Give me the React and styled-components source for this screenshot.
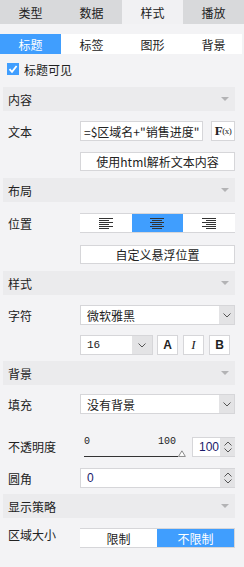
import React from "react";
import styled, { createGlobalStyle } from "styled-components";

const Global = createGlobalStyle`
  html, body {
    margin: 0;
    padding: 0;
    background: #f3f3f5;
  }
  body {
    font-family: "Noto Sans CJK SC", "Liberation Sans", sans-serif;
    font-size: 12px;
    color: #222;
  }
`;

const Page = styled.div`
  width: 244px;
  height: 567px;
  background: #f3f3f5;
  overflow: hidden;
`;

const TopTabs = styled.div`
  display: grid;
  grid-template-columns: repeat(4, 61px);
  height: 24px;
  background: #d8d9db;
`;

const TopTab = styled.div`
  display: flex;
  align-items: center;
  justify-content: center;
  font-size: 12px;
  background: ${p => (p.active ? "#f1f1f3" : "transparent")};
`;

const SubTabs = styled.div`
  display: grid;
  grid-template-columns: repeat(4, 61px);
  width: 242px;
  height: 20px;
  margin-top: 10px;
  background: #fff;
`;

const SubTab = styled.div`
  display: flex;
  align-items: center;
  justify-content: center;
  font-size: 12px;
  color: ${p => (p.active ? "#fff" : "#222")};
  background: ${p => (p.active ? "#409efe" : "transparent")};
`;

const CheckRow = styled.label`
  display: flex;
  align-items: center;
  gap: 5px;
  height: 22px;
  margin-top: 4px;
  padding-left: 7px;
`;

const CheckBox = styled.span`
  width: 12px;
  height: 12px;
  background: #409efe;
  display: flex;
  align-items: center;
  justify-content: center;
`;

const Header = styled.div`
  display: flex;
  align-items: center;
  justify-content: space-between;
  margin: ${p => p.top || 7}px 0 0 3px;
  width: 232px;
  height: 24px;
  padding: 0 5px;
  box-sizing: border-box;
  background: #ebebed;
`;

const Caret = styled.span`
  width: 0;
  height: 0;
  border-left: 4px solid transparent;
  border-right: 4px solid transparent;
  border-top: 4px solid #b3b3b5;
  margin-right: 1px;
`;

const Row = styled.div`
  display: flex;
  align-items: ${p => (p.alignTop ? "flex-start" : "center")};
  margin-top: ${p => p.top ?? 10}px;
  min-height: 20px;
`;

const Label = styled.div`
  width: 72px;
  padding-left: 8px;
  flex-shrink: 0;
  line-height: ${p => (p.alignTop ? "14px" : "normal")};
`;

const Control = styled.div`
  display: flex;
  align-items: center;
  width: 155px;
`;

const TextBox = styled.div`
  flex: 1;
  height: 20px;
  box-sizing: border-box;
  border: 1px solid #d6d6d9;
  background: #fff;
  display: flex;
  align-items: center;
  padding-left: ${p => p.pad ?? 4}px;
  font-size: 12px;
  white-space: nowrap;
  overflow: hidden;
`;

const Fx = styled.div`
  width: 24px;
  height: 20px;
  box-sizing: border-box;
  border: 1px solid #d6d6d9;
  background: #fff;
  margin-left: 8px;
  display: flex;
  align-items: center;
  justify-content: center;
  font-family: "Liberation Serif", serif;
  font-weight: bold;
  font-size: 13px;
  letter-spacing: -0.5px;
  & small {
    font-size: 9px;
    font-weight: normal;
  }
`;

const Button = styled.div`
  width: 155px;
  height: 19px;
  box-sizing: border-box;
  border: 1px solid #d6d6d9;
  background: #fff;
  display: flex;
  align-items: center;
  justify-content: center;
  font-size: 12px;
`;

const Segments = styled.div`
  display: grid;
  grid-template-columns: repeat(${p => p.count}, 1fr);
  width: 155px;
  height: 20px;
  box-sizing: border-box;
  border: 1px solid #d6d6d9;
  border-left: none;
  border-right: ${p => (p.closed ? "1px solid #d6d6d9" : "none")};
  background: #fff;
`;

const Segment = styled.div`
  display: flex;
  align-items: center;
  justify-content: center;
  background: ${p => (p.active ? "#409efe" : "transparent")};
  color: ${p => (p.active ? "#fff" : "#222")};
  font-size: 12px;
`;

const Select = styled.div`
  display: flex;
  width: ${p => p.w || 155}px;
  height: 20px;
  box-sizing: border-box;
  border: 1px solid #d6d6d9;
  background: #fff;
`;

const SelectText = styled.div`
  flex: 1;
  display: flex;
  align-items: center;
  padding-left: 6px;
  font-size: ${p => (p.num ? 11 : 12)}px;
  font-family: ${p =>
    p.num ? '"Liberation Mono", monospace' : "inherit"};
`;

const SelectArrow = styled.div`
  width: ${p => p.w || 15}px;
  background: #e3e3e5;
  display: flex;
  align-items: center;
  justify-content: center;
`;

const StyleBtn = styled.div`
  width: 21px;
  height: 20px;
  box-sizing: border-box;
  border: 1px solid #d6d6d9;
  background: #fff;
  display: flex;
  align-items: center;
  justify-content: center;
  font-family: ${p =>
    p.italic ? '"Liberation Serif", serif' : '"Liberation Sans", sans-serif'};
  font-style: ${p => (p.italic ? "italic" : "normal")};
  font-weight: ${p => (p.italic ? "normal" : "bold")};
  font-size: ${p => (p.italic ? 13 : 12)}px;
  color: #222;
  margin-left: ${p => p.ml || 0}px;
`;

const Slider = styled.div`
  width: 106px;
  display: flex;
  flex-direction: column;
  padding-left: 4px;
  padding-top: 1px;
  box-sizing: border-box;
`;

const SliderLabels = styled.div`
  display: flex;
  justify-content: space-between;
  width: 92px;
  font-family: "Liberation Mono", monospace;
  font-size: 10px;
  line-height: 10px;
`;

const SliderTrack = styled.div`
  display: flex;
  align-items: flex-end;
  margin-top: 3px;
  & span {
    width: 96px;
    height: 1px;
    background: #333;
  }
`;

const Spin = styled.div`
  display: flex;
  height: 20px;
  width: ${p => p.w}px;
  box-sizing: border-box;
  border: 1px solid #d6d6d9;
  border-right: none;
  background: #fff;
  margin-left: ${p => p.ml || 0}px;
`;

const SpinValue = styled.div`
  flex: 1;
  display: flex;
  align-items: center;
  padding-left: 6px;
  font-family: "Liberation Sans", sans-serif;
  font-size: 12px;
  color: #1a1a6a;
`;

const SpinArrows = styled.div`
  width: 15px;
  background: #e3e3e5;
  display: flex;
  flex-direction: column;
  align-items: center;
  justify-content: center;
  gap: 2px;
`;

const Chevron = ({ up }) => (
  <svg width="8" height="5" viewBox="0 0 8 5">
    <path
      d={up ? "M0.5 4.5 L4 1 L7.5 4.5" : "M0.5 0.5 L4 4 L7.5 0.5"}
      fill="none"
      stroke="#555"
      strokeWidth="1"
    />
  </svg>
);

// six horizontal strokes, long/short alternating
const AlignIcon = ({ mode }) => {
  const lens = [14, 10, 14, 10, 14, 10];
  return (
    <svg width="14" height="11" viewBox="0 0 14 11" shapeRendering="crispEdges">
      {lens.map((l, i) => {
        let x = 0;
        if (mode === "center") x = (14 - l) / 2;
        if (mode === "right") x = 14 - l;
        return <rect key={i} x={x} y={i * 2} width={l} height="1" fill="#333" />;
      })}
    </svg>
  );
};

const Check = () => (
  <svg width="10" height="10" viewBox="0 0 10 10">
    <path d="M1.5 5.2 L4 7.8 L8.6 2" fill="none" stroke="#fff" strokeWidth="1.8" />
  </svg>
);

const App = () => (
  <Page>
    <Global />
    <TopTabs>
      <TopTab>类型</TopTab>
      <TopTab>数据</TopTab>
      <TopTab active>样式</TopTab>
      <TopTab>播放</TopTab>
    </TopTabs>
    <SubTabs>
      <SubTab active>标题</SubTab>
      <SubTab>标签</SubTab>
      <SubTab>图形</SubTab>
      <SubTab>背景</SubTab>
    </SubTabs>
    <CheckRow>
      <CheckBox>
        <Check />
      </CheckBox>
      标题可见
    </CheckRow>

    <Header top={7}>
      内容
      <Caret />
    </Header>
    <Row top={10}>
      <Label>文本</Label>
      <Control>
        <TextBox pad={3}>=$区域名+"销售进度"</TextBox>
        <Fx>
          F<small>(x)</small>
        </Fx>
      </Control>
    </Row>
    <Row top={10}>
      <Label />
      <Button>使用html解析文本内容</Button>
    </Row>

    <Header top={7}>
      布局
      <Caret />
    </Header>
    <Row top={11}>
      <Label>位置</Label>
      <Segments count={3}>
        <Segment>
          <AlignIcon mode="left" />
        </Segment>
        <Segment active>
          <AlignIcon mode="center" />
        </Segment>
        <Segment>
          <AlignIcon mode="right" />
        </Segment>
      </Segments>
    </Row>
    <Row top={11}>
      <Label />
      <Button>自定义悬浮位置</Button>
    </Row>

    <Header top={7}>
      样式
      <Caret />
    </Header>
    <Row top={10}>
      <Label>字符</Label>
      <Select>
        <SelectText>微软雅黑</SelectText>
        <SelectArrow>
          <Chevron />
        </SelectArrow>
      </Select>
    </Row>
    <Row top={10}>
      <Label />
      <Control>
        <Select w={73}>
          <SelectText num>16</SelectText>
          <SelectArrow w={20}>
            <Chevron />
          </SelectArrow>
        </Select>
        <StyleBtn ml={4}>A</StyleBtn>
        <StyleBtn ml={5} italic>
          I
        </StyleBtn>
        <StyleBtn ml={5}>B</StyleBtn>
      </Control>
    </Row>

    <Header top={6}>
      背景
      <Caret />
    </Header>
    <Row top={9}>
      <Label>填充</Label>
      <Select>
        <SelectText>没有背景</SelectText>
        <SelectArrow>
          <Chevron />
        </SelectArrow>
      </Select>
    </Row>
    <Row top={22}>
      <Label>不透明度</Label>
      <Control>
        <Slider>
          <SliderLabels>
            <span>0</span>
            <span>100</span>
          </SliderLabels>
          <SliderTrack>
            <span />
            <svg width="8" height="7" viewBox="0 0 8 7">
              <path d="M0.5 6.5 L4 0.8 L7.5 6.5 Z" fill="#fff" stroke="#888" />
            </svg>
          </SliderTrack>
        </Slider>
        <Spin w={43} ml={6}>
          <SpinValue>100</SpinValue>
          <SpinArrows>
            <Chevron up />
            <Chevron />
          </SpinArrows>
        </Spin>
      </Control>
    </Row>
    <Row top={11}>
      <Label>圆角</Label>
      <Spin w={155}>
        <SpinValue>0</SpinValue>
        <SpinArrows>
          <Chevron up />
          <Chevron />
        </SpinArrows>
      </Spin>
    </Row>

    <Header top={6}>
      显示策略
      <Caret />
    </Header>
    <Row top={10} alignTop>
      <Label alignTop>区域大小</Label>
      <Segments count={2} closed>
        <Segment>限制</Segment>
        <Segment active>不限制</Segment>
      </Segments>
    </Row>
  </Page>
);

export default App;
